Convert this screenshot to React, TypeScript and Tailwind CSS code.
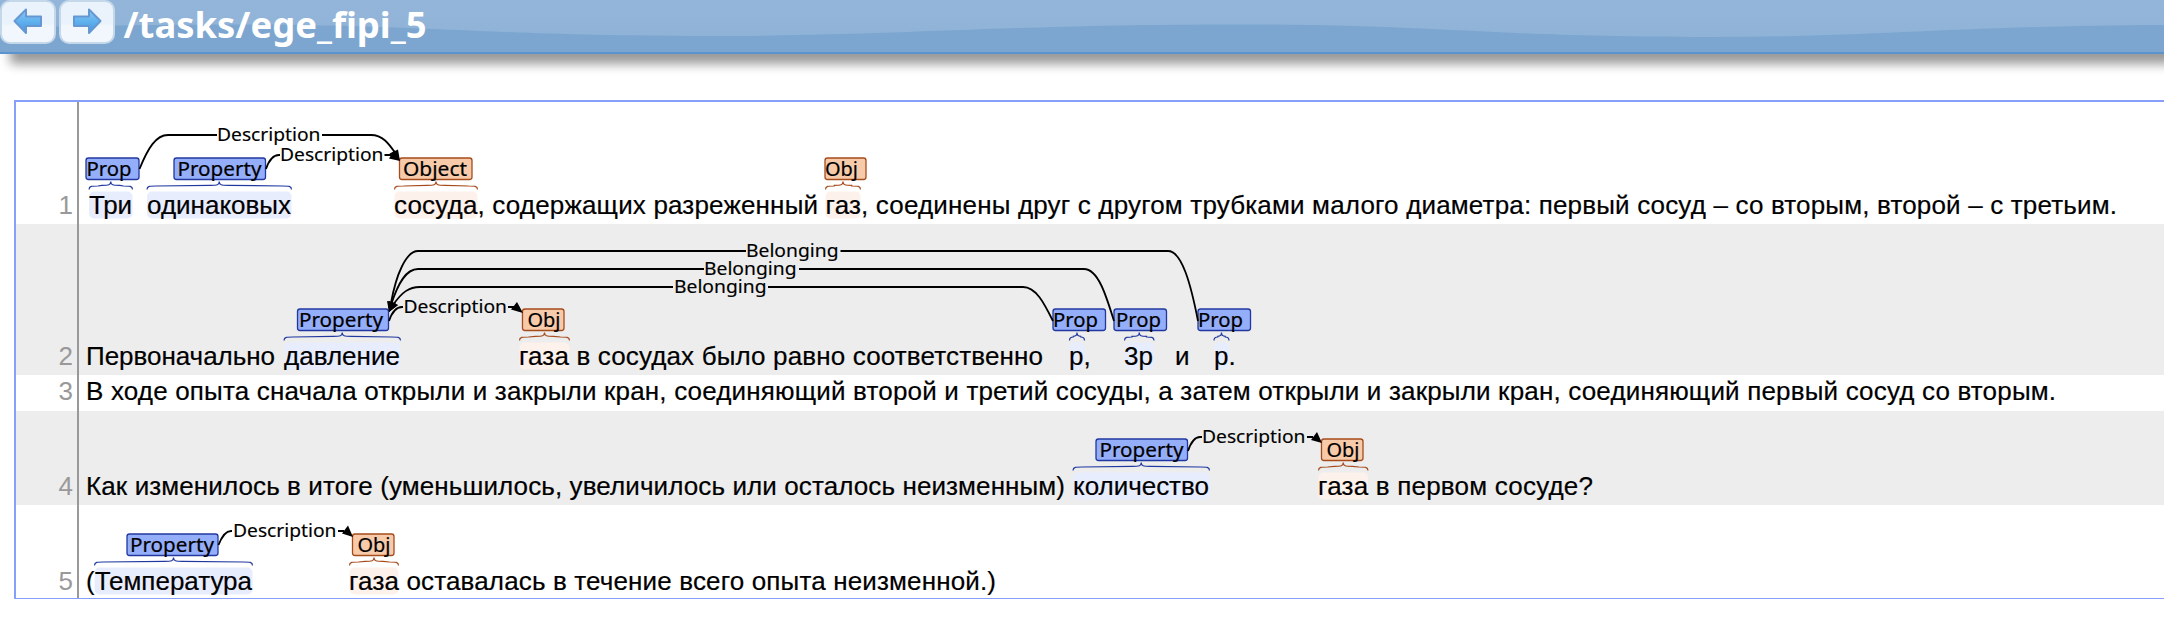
import React from "react";

const BLUE = { fill: "#95aefa", stroke: "#2038a0", tint: "#e8edfe" };
const ORANGE = { fill: "#f7cbaa", stroke: "#a64b1c", tint: "#fdf1ec" };

type Seg = { x: number; text: string; w?: number };
type Mark = {
  kind: "b" | "o";
  label: string;
  box: [number, number];
  text: [number, number];
  span: [number, number];
};
type Arc = { d: string; label: string; x: number; w: number; y: number; arrow: string };
type Row = { h: string; bg: string; top: number; height: number; base: number; segs: Seg[]; marks: Mark[]; arcs: Arc[] };

const ROWS: Row[] = [
  {
    h: "h-[122px]", bg: "bg-white", top: 102, height: 122, base: 214,
    segs: [
      { x: 89, w: 43, text: "Три" },
      { x: 147, w: 144, text: "одинаковых" },
      { x: 394, w: 1723, text: "сосуда, содержащих разреженный газ, соединены друг с другом трубками малого диаметра: первый сосуд – со вторым, второй – с третьим." },
    ],
    marks: [
      { kind: "b", label: "Prop", box: [85.5, 139.5], text: [86.5, 45], span: [89, 132.5] },
      { kind: "b", label: "Property", box: [173.5, 266], text: [177.5, 84], span: [147, 291.5] },
      { kind: "o", label: "Object", box: [399, 472.5], text: [403, 64], span: [394.5, 477.5] },
      { kind: "o", label: "Obj", box: [824.5, 866.5], text: [825, 33], span: [825.5, 860.5] },
    ],
    arcs: [
      { d: "M139.5 169 C148 148 156 135 168 135 H217 M322 135 H371 C383 135 389 144 396 154", label: "Description", x: 217, w: 103.5, y: 141, arrow: "M400 161 L389.5 153.5 L398 149.5 Z" },
      { d: "M266 169 C269 160 273 155 279 155 H280 M384.5 155 H391", label: "Description", x: 280, w: 103.5, y: 161, arrow: "M400 161 L389 158.5 L394 150 Z" },
    ],
  },
  {
    h: "h-[151px]", bg: "bg-[#ededed]", top: 224, height: 151, base: 365,
    segs: [
      { x: 86, w: 189, text: "Первоначально" },
      { x: 284, w: 116, text: "давление" },
      { x: 519, w: 524, text: "газа в сосудах было равно соответственно" },
      { x: 1069, text: "p," },
      { x: 1124, text: "3p" },
      { x: 1175, text: "и" },
      { x: 1214, text: "p." },
    ],
    marks: [
      { kind: "b", label: "Property", box: [297, 389], text: [299, 84], span: [284, 400.5] },
      { kind: "o", label: "Obj", box: [522, 564.5], text: [527.5, 33], span: [519.5, 569.5] },
      { kind: "b", label: "Prop", box: [1052.5, 1106], text: [1053, 45], span: [1069.5, 1084.5] },
      { kind: "b", label: "Prop", box: [1113.5, 1167], text: [1116, 45], span: [1124.5, 1154] },
      { kind: "b", label: "Prop", box: [1197.5, 1251], text: [1198, 45], span: [1214, 1229] },
    ],
    arcs: [
      { d: "M391 303 C396 275 406 251 418 251 H746 M840.5 251 H1168 C1182 251 1191 285 1198 321", label: "Belonging", x: 746, w: 92.5, y: 257, arrow: "M389 312 L387 301 L396 303 Z" },
      { d: "M391 305 C398 283 406 269 418 269 H704 M799 269 H1084 C1098 269 1106 295 1114 321", label: "Belonging", x: 704, w: 92.5, y: 275, arrow: "M389 312 L388 301 L398 305 Z" },
      { d: "M393 305 C402 292 409 287 420 287 H673 M768 287 H1023 C1036 287 1044 303 1053 321", label: "Belonging", x: 674, w: 92.5, y: 293, arrow: "M389 312 L389 301 L398 305 Z" },
      { d: "M389 321 C392 312 396 307 402 307 H403 M508 307 H514", label: "Description", x: 403.5, w: 103.5, y: 313, arrow: "M523 313 L511 309.5 L517 302 Z" },
    ],
  },
  {
    h: "h-[36px]", bg: "bg-white", top: 375, height: 36, base: 400,
    segs: [{ x: 86, w: 1970, text: "В ходе опыта сначала открыли и закрыли кран, соединяющий второй и третий сосуды, а затем открыли и закрыли кран, соединяющий первый сосуд со вторым." }],
    marks: [], arcs: [],
  },
  {
    h: "h-[94px]", bg: "bg-[#ededed]", top: 411, height: 94, base: 495,
    segs: [
      { x: 86, w: 979, text: "Как изменилось в итоге (уменьшилось, увеличилось или осталось неизменным)" },
      { x: 1073, w: 136, text: "количество" },
      { x: 1318, w: 275, text: "газа в первом сосуде?" },
    ],
    marks: [
      { kind: "b", label: "Property", box: [1095.5, 1188], text: [1099.5, 84], span: [1073, 1209.5] },
      { kind: "o", label: "Obj", box: [1321, 1363.5], text: [1326.5, 33], span: [1318.5, 1368] },
    ],
    arcs: [{ d: "M1188 451 C1191 442 1195 437 1200 437 H1202 M1307 437 H1313", label: "Description", x: 1202, w: 103.5, y: 443, arrow: "M1322 443 L1311 440 L1317 432 Z" }],
  },
  {
    h: "h-[93px]", bg: "bg-white", top: 505, height: 93, base: 590,
    segs: [
      { x: 86, w: 166, text: "(Температура" },
      { x: 349, w: 647, text: "газа оставалась в течение всего опыта неизменной.)" },
    ],
    marks: [
      { kind: "b", label: "Property", box: [126.5, 218.5], text: [130, 84], span: [94.5, 252.5] },
      { kind: "o", label: "Obj", box: [352, 394.5], text: [357.5, 33], span: [349.5, 398.5] },
    ],
    arcs: [{ d: "M218.5 545 C222 536 226 531 231 531 H232 M338 531 H344", label: "Description", x: 233, w: 103.5, y: 537, arrow: "M353 537 L342 533.5 L348 525.5 Z" }],
  },
];

// Curly brace opening downwards over a text span, with its tip at the centre.
function brace(x1: number, x2: number, y: number) {
  const m = (x1 + x2) / 2;
  const q = Math.min(9, (x2 - x1) / 4);
  const t = y - 3.5;
  return `M${x1} ${y} C${x1} ${t} ${x1 + 3} ${t} ${x1 + q} ${t} L${m - q} ${t - 0.7} C${m - 2} ${t - 0.7} ${m} ${t - 1} ${m} ${t - 4.5} C${m} ${t - 1} ${m + 2} ${t - 0.7} ${m + q} ${t - 0.7} L${x2 - q} ${t} C${x2 - 3} ${t} ${x2} ${t} ${x2} ${y}`;
}

function SentenceRow({ row, n }: { row: Row; n: number }) {
  return (
    <div className={`flex ${row.h} ${row.bg}`}>
      <div className="flex w-[63px] shrink-0 items-end justify-end border-r-2 border-[#999] pr-1">
        <svg width="40" height={row.height} className="block">
          <text x="40" y={row.base - row.top} textAnchor="end" fontSize="26" fill="#999">{n}</text>
        </svg>
      </div>
      <svg className="block shrink-0" width="2085" height={row.height} viewBox={`79 ${row.top} 2085 ${row.height}`}>
        {row.marks.map((m, i) => {
          const c = m.kind === "b" ? BLUE : ORANGE;
          return (
            <g key={i}>
              <rect x={m.span[0]} y={row.base - 22.5} width={m.span[1] - m.span[0]} height="27" rx="5" fill={c.tint} />
              <rect x={m.box[0] + 0.5} y={row.base - 56} width={m.box[1] - m.box[0] - 1} height="21.5" rx="2.5" fill={c.fill} stroke={c.stroke} strokeWidth="1.3" />
              <path d={brace(m.span[0], m.span[1], row.base - 24.5)} fill="none" stroke={c.stroke} strokeWidth="1.2" />
              <text x={m.text[0]} y={row.base - 38.5} textLength={m.text[1]} lengthAdjust="spacingAndGlyphs" fontSize="19" stroke="#000" strokeWidth="0.2" className="font-['Noto_Sans',sans-serif]">{m.label}</text>
            </g>
          );
        })}
        {row.arcs.map((a, i) => (
          <g key={i}>
            <path d={a.d} fill="none" stroke="#000" strokeWidth="1.8" />
            <path d={a.arrow} />
            <text x={a.x} y={a.y} textLength={a.w} lengthAdjust="spacingAndGlyphs" fontSize="17.5" stroke="#000" strokeWidth="0.15" className="font-['Noto_Sans',sans-serif]">{a.label}</text>
          </g>
        ))}
        {row.segs.map((s, i) => (
          <text key={i} x={s.x} y={row.base} textLength={s.w} fontSize="26" stroke="#000" strokeWidth="0.2">{s.text}</text>
        ))}
      </svg>
    </div>
  );
}

function NavButton({ flip }: { flip?: boolean }) {
  return (
    <button className="flex h-11 w-14 items-center justify-center rounded-[10px] border-2 border-[#c5d8ea] bg-linear-to-b from-[#eaf3fb] from-55% to-[#f1f7fc] to-60%">
      <svg width="30" height="28" viewBox="0 0 30 28" className={flip ? "-scale-x-100" : ""}>
        <defs>
          <linearGradient id="arrow" x1="0" y1="0" x2="0" y2="1">
            <stop offset="0" stopColor="#8fc6f2" /><stop offset="0.5" stopColor="#5fb2ee" /><stop offset="1" stopColor="#4a94dc" />
          </linearGradient>
        </defs>
        <path d="M1.5 13 L13 1.5 V8.5 H28 V18 H13 V25 Z" fill="url(#arrow)" stroke="#6598d2" strokeWidth="2" strokeLinejoin="round" />
      </svg>
    </button>
  );
}

export default function App() {
  return (
    <div className="h-[620px] w-[2164px] overflow-hidden bg-white font-['Liberation_Sans',Arial,sans-serif] text-black">
      <header className="relative h-[54px] border-b-2 border-[#5a93d0] bg-[#7ca6cf] shadow-[10px_10px_10px_rgba(0,0,0,0.4)]">
        <svg className="absolute inset-0" width="2164" height="52">
          <defs>
            <linearGradient id="gloss" x1="0" y1="0" x2="0" y2="1">
              <stop offset="0" stopColor="#93b5d9" /><stop offset="1" stopColor="#8fb3d7" />
            </linearGradient>
          </defs>
          <path d="M0 0 H2164 V25 C1950 26 1880 37 1710 37 C1490 37 1440 24.5 1240 24.5 C1000 24.5 900 36 705 36 C500 36 420 24.5 240 24.5 C150 24.5 80 26 0 28 Z" fill="url(#gloss)" />
        </svg>
        <div className="relative flex items-start gap-[3px]">
          <NavButton />
          <NavButton flip />
          <svg width="320" height="52" className="ml-[5px] block">
            <text x="0.5" y="38" textLength="303" fontSize="35" fontWeight="700" fill="#fff" lengthAdjust="spacingAndGlyphs" className="font-['Noto_Sans',sans-serif]">/tasks/ege_fipi_5</text>
          </svg>
        </div>
      </header>
      <main className="mt-[46px] ml-[14px] w-[2180px] border-t-2 border-b border-l-2 border-[#879ffb]">
        {ROWS.map((r, i) => <SentenceRow key={i} row={r} n={i + 1} />)}
      </main>
    </div>
  );
}
